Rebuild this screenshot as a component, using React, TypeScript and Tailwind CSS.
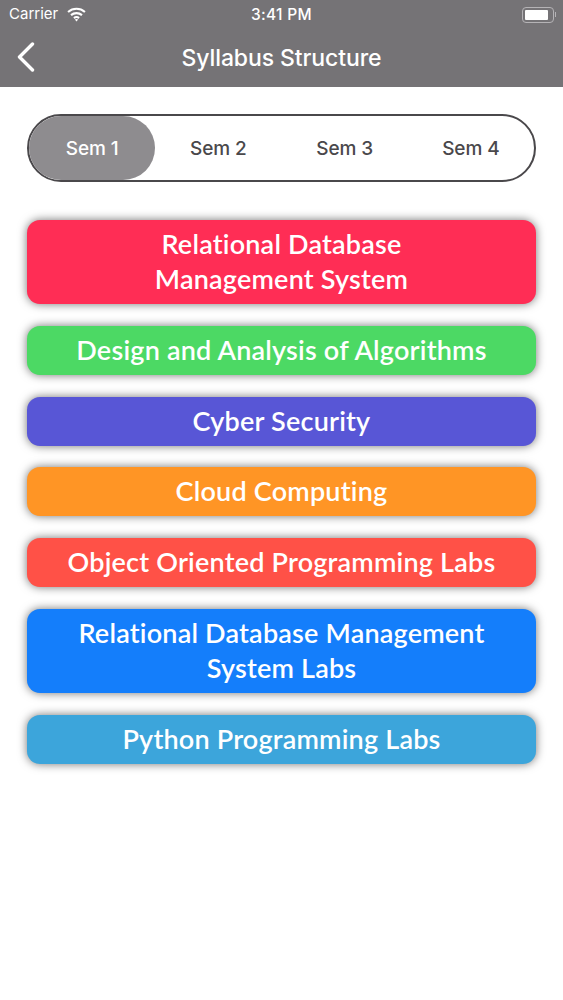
import { useState } from "react";

const subjects = [
  { name: ["Relational Database", "Management System"], color: "bg-[#ff2d55]" },
  { name: ["Design and Analysis of Algorithms"], color: "bg-[#4cd964]" },
  { name: ["Cyber Security"], color: "bg-[#5856d6]" },
  { name: ["Cloud Computing"], color: "bg-[#ff9525]" },
  { name: ["Object Oriented Programming Labs"], color: "bg-[#ff5147]" },
  { name: ["Relational Database Management", "System Labs"], color: "bg-[#147efb]" },
  { name: ["Python Programming Labs"], color: "bg-[#3ca5db]" },
];

const sems = ["Sem 1", "Sem 2", "Sem 3", "Sem 4"];

function Wifi() {
  return (
    <svg width="19" height="15" viewBox="0 0 18 14" fill="none" stroke="white" strokeWidth="2">
      <path d="M1 4.6C5.6 .6 12.4 .6 17 4.6" />
      <path d="M3.8 7.6C6.8 5 11.2 5 14.2 7.6" />
      <path d="M6.6 10.4C8 9.2 10 9.2 11.4 10.4" />
      <path d="M9 13.6L7.4 11.8C8.4 11 9.6 11 10.6 11.8Z" fill="white" stroke="none" />
    </svg>
  );
}

function Battery() {
  return (
    <div className="flex items-center">
      <div className="w-[32px] h-[16px] rounded-[4px] border border-[#b5b3b6] p-[2px]">
        <div className="w-[23px] h-full rounded-[1px] bg-white" />
      </div>
      <div className="w-[1.5px] h-[5px] bg-[#b5b3b6] ml-[1px]" />
    </div>
  );
}

export default function App() {
  const [active, setActive] = useState(0);

  return (
    <div className="min-h-[1000px] bg-white font-['Liberation_Sans',sans-serif]">
      <div className="h-[87px] bg-[#757376] text-white">
        <div className="h-[29px] relative flex items-center justify-between pl-[9px] pr-[7px] font-['Inter',sans-serif]">
          <div className="flex items-center gap-[9px] text-[15px]">
            <span>Carrier</span>
            <Wifi />
          </div>
          <span className="absolute left-0 right-0 text-center text-[15.5px] tracking-[0.3px] font-medium">3:41 PM</span>
          <Battery />
        </div>
        <div className="h-[58px] relative flex items-center justify-center">
          <svg className="absolute left-[16px] top-[13px]" width="20" height="30" viewBox="0 0 20 30" fill="none" stroke="white" strokeWidth="3.4" strokeLinecap="round" strokeLinejoin="round">
            <path d="M16.5 2L3.5 15L16.5 28" />
          </svg>
          <span className="text-[23px] font-medium font-['Inter',sans-serif] tracking-[-0.1px]">Syllabus Structure</span>
        </div>
      </div>

      <div className="px-[27px] pt-[27px]">
        <div className="h-[68px] rounded-full border-2 border-[#4a484b] grid grid-cols-4 overflow-hidden">
          {sems.map((s, i) => (
            <button
              key={s}
              onClick={() => setActive(i)}
              className={
                "text-center text-[19px] pt-[2px] font-medium font-['Inter',sans-serif] tracking-[-0.1px] " +
                (active === i ? "bg-[#8e8c8f] text-white rounded-r-full" : "text-[#4a484b]")
              }
            >
              {s}
            </button>
          ))}
        </div>

        <div className="mt-[38px] flex flex-col gap-[21.8px]">
          {subjects.map((subject) => (
            <div
              key={subject.name[0]}
              className={
                "py-[7px] rounded-[13px] text-white text-center text-[27px] leading-[35px] tracking-[0.2px] font-semibold font-['Lato',sans-serif] shadow-[0_0_10px_rgba(0,0,0,0.55)] " +
                subject.color
              }
            >
              {subject.name.map((line) => (
                <div key={line} className="-mt-[1px] mb-[1px]">
                  {line}
                </div>
              ))}
            </div>
          ))}
        </div>
      </div>
    </div>
  );
}
